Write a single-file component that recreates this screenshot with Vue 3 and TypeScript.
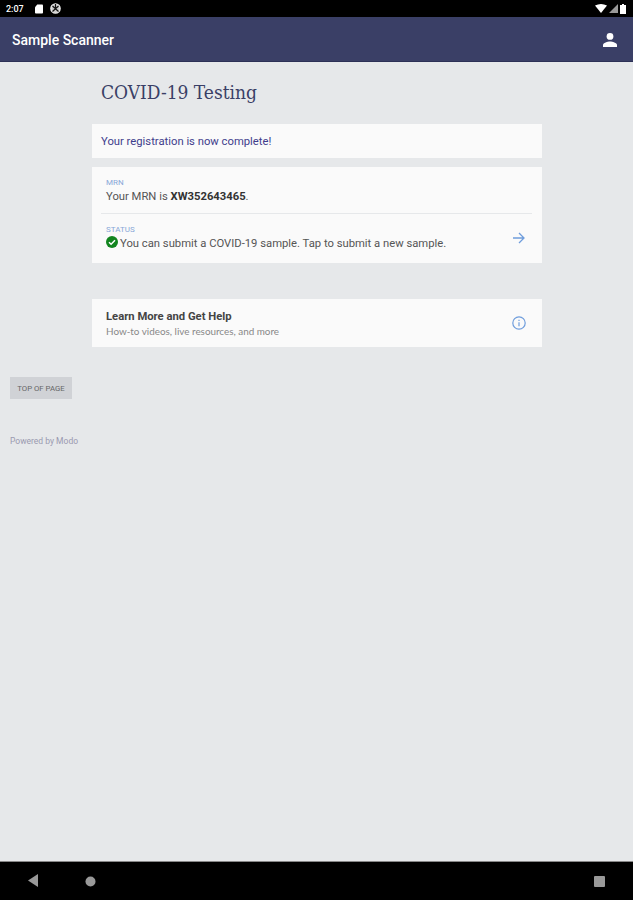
<script setup lang="ts">
const title = 'COVID-19 Testing'
</script>

<template>
  <div class="screen">
    <header class="status">
      <div class="status-left">
        <span class="time">2:07</span>
        <svg width="8" height="10" viewBox="0 0 9 10"><path d="M2.5 0H8a1 1 0 0 1 1 1v8a1 1 0 0 1-1 1H1a1 1 0 0 1-1-1V3z" fill="#fff" /></svg>
        <svg width="11" height="11" viewBox="0 0 11 11"><circle cx="5.5" cy="5.5" r="4.6" fill="#ccc" stroke="#eee" stroke-width="1.4" /><path d="M2.5 3l6 5.500M8.500 3l-6 5.500M5.500 1v4" stroke="#111" stroke-width="1.2" fill="none" /></svg>
      </div>
      <div class="status-right">
        <svg width="12" height="9" viewBox="0 0 12 9"><path d="M0 1.500Q6-1.500 12 1.500L6 9z" fill="#fff" /></svg>
        <svg width="9" height="9" viewBox="0 0 9 9"><path d="M9 0v9H0z" fill="#999" /></svg>
        <svg width="6" height="10" viewBox="0 0 6 10"><path d="M2 0h2v1h2v9H0V1h2z" fill="#fff" /></svg>
      </div>
    </header>

    <nav class="appbar">
      <span class="appname">Sample Scanner</span>
      <svg class="user" width="16" height="16" viewBox="0 0 16 16"><circle cx="8" cy="4.400" r="3.400" fill="#fff" /><path d="M1 15v-2c0-2.400 4.600-3.600 7-3.600s7 1.200 7 3.600v2z" fill="#fff" /></svg>
    </nav>

    <main class="content">
      <div class="column">
        <h1 class="title">{{ title }}</h1>

        <section class="card notice">Your registration is now complete!</section>

        <section class="card info">
          <div class="row first">
            <div class="label">MRN</div>
            <div class="text">Your MRN is <b>XW352643465</b>.</div>
          </div>
          <div class="row second">
            <div class="label">STATUS</div>
            <div class="text status-text">
              <svg class="check" width="12" height="12" viewBox="0 0 12 12"><circle cx="6" cy="6" r="6" fill="#12851f" /><path d="M3 6.200l2.100 2L9 4.300" stroke="#fff" stroke-width="1.500" fill="none" /></svg>
              <span>You can submit a COVID-19 sample. Tap to submit a new sample.</span>
            </div>
            <svg class="side-icon" width="13" height="12" viewBox="0 0 13 12"><path d="M1 6h11M7 1l5 5-5 5" stroke="#6f9ddc" stroke-width="1.300" fill="none" /></svg>
          </div>
        </section>

        <section class="card help">
          <div>
            <div class="help-title">Learn More and Get Help</div>
            <div class="help-sub">How-to videos, live resources, and more</div>
          </div>
          <svg class="side-icon" width="14" height="14" viewBox="0 0 14 14"><circle cx="7" cy="7" r="6.200" stroke="#6f9ddc" stroke-width="1.200" fill="none" /><path d="M7 6.200v4M7 3.800v1.200" stroke="#6f9ddc" stroke-width="1.200" /></svg>
        </section>
      </div>

      <div class="page-foot">
        <button class="top-btn">TOP OF PAGE</button>
        <div class="powered">Powered by Modo</div>
      </div>
    </main>

    <footer class="navbar">
      <svg class="nav-back" width="11" height="13" viewBox="0 0 11 13"><path d="M10 0v13L0 6.500z" fill="#999" /></svg>
      <svg class="nav-home" width="11" height="11" viewBox="0 0 11 11"><circle cx="5.500" cy="5.500" r="5" fill="#999" /></svg>
      <svg class="nav-recent" width="11" height="11" viewBox="0 0 11 11"><rect width="11" height="11" rx="1" fill="#999" /></svg>
    </footer>
  </div>
</template>

<style>
html, body { margin: 0; background: #e6e8ea; }
</style>

<style scoped>
.screen {
  width: 633px;
  height: 900px;
  display: flex;
  flex-direction: column;
  overflow: hidden;
  font-family: Roboto, "Liberation Sans", sans-serif;
  background: #e6e8ea;
}
.status {
  height: 17px;
  background: #000;
  display: flex;
  align-items: center;
  justify-content: space-between;
  padding: 0 7px 0 6px;
  flex: none;
}
.status-left, .status-right { display: flex; align-items: center; }
.status-left { gap: 7px; }
.status-right { gap: 2px; }
.time { color: #fff; font-size: 9px; font-weight: 500; margin-right: 4px; }
.appbar {
  height: 45px;
  flex: none;
  background: #3a3f66;
  display: flex;
  align-items: center;
  justify-content: space-between;
  padding: 2px 15px 0 12px;
  border-bottom: 1px solid #2c3056;
  box-sizing: border-box;
}
.appname { color: #fff; font-size: 14px; font-weight: 500; }
.content { flex: 1; min-height: 0; }
.column {
  width: 450px;
  margin-left: 92px;
}
.title {
  margin: 0;
  padding: 18px 0 0 9px;
  height: 44px;
  font-family: "DejaVu Serif Condensed", "DejaVu Serif", serif;
  font-stretch: condensed;
  font-size: 19px;
  line-height: 25px;
  font-weight: 400;
  color: #3a3f66;
  box-sizing: content-box;
}
.card {
  background: #fafafa;
}
.notice {
  margin-top: 0;
  height: 34px;
  line-height: 36px;
  padding-left: 9px;
  font-size: 11.250px;
  color: #3f3d8c;
}
.info {
  margin-top: 9px;
  height: 96px;
  padding: 0 10px 0 14px;
}
.row { position: relative; box-sizing: border-box; }
.first { height: 47px; padding-top: 11px; margin-left: -5px; padding-left: 5px; border-bottom: 1px solid #e6e8ea; }
.second { padding-top: 11px; height: 49px; }
.label { font-size: 8px; line-height: 10px; color: #88a7d8; }
.text { font-size: 11.250px; line-height: 16px; color: #555; margin-top: 1px; }
.text b { color: #333; font-weight: 700; }
.status-text { display: flex; align-items: center; gap: 2px; }
.check { flex: none; margin-top: -4px; }
.second .side-icon { position: absolute; right: 7px; top: 18px; }
.help {
  margin-top: 36px;
  height: 48px;
  padding: 2px 16px 0 14px;
  display: flex;
  align-items: center;
  justify-content: space-between;
  box-sizing: border-box;
}
.help .side-icon { margin-top: -2px; }
.help-title { font-size: 11.250px; line-height: 14px; font-weight: 700; color: #444; }
.help-sub { font-size: 9.900px; line-height: 14px; color: #888; font-family: Lato, Roboto, sans-serif; }
.page-foot { margin-top: 30px; padding-left: 10px; }
.top-btn {
  display: block;
  width: 62px;
  height: 22px;
  border: 0;
  padding: 0;
  background: #d0d2d6;
  color: #666;
  font-family: inherit;
  font-size: 7.800px;
}
.powered { margin-top: 36px; font-size: 8.500px; line-height: 12px; color: #9a9ab0; }
.navbar {
  height: 39px;
  flex: none;
  background: #000;
  position: relative;
  border-top: 1px solid #888;
  box-sizing: border-box;
}
.navbar svg { position: absolute; top: 14px; }
.navbar .nav-back { left: 28px; top: 12px; }
.nav-home { left: 85px; }
.nav-recent { left: 594px; }
</style>
